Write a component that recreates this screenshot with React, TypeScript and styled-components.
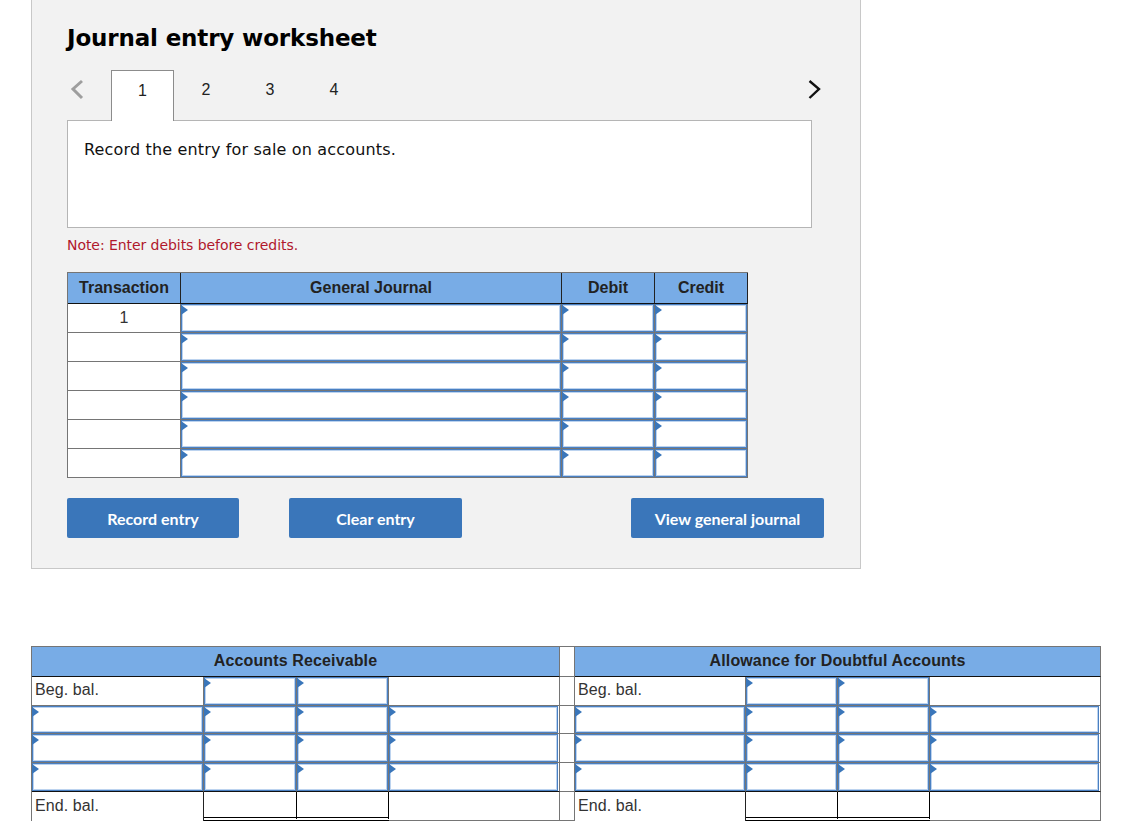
import styled, { createGlobalStyle } from 'styled-components'

const GlobalStyle = createGlobalStyle`
  html, body {
    margin: 0;
    padding: 0;
    background: #ffffff;
  }
  body {
    font-family: "Liberation Sans", Arial, sans-serif;
  }
`

// worksheet panel
const Page = styled.div`
  width: 1147px;
  height: 832px;
  overflow: hidden;
  padding-left: 31px;
  box-sizing: border-box;
`
const Panel = styled.section`
  width: 830px;
  height: 569px;
  box-sizing: border-box;
  padding: 22px 0 0 35px;
  background: #f2f2f2;
  border: 1px solid #c8c8c8;
  border-top: none;
`
const Title = styled.h1`
  margin: 0;
  font: bold 23px/32px "DejaVu Sans", Verdana, sans-serif;
  letter-spacing: -0.15px;
  color: #000000;
`
const TabRow = styled.div`
  display: flex;
  align-items: flex-start;
  width: 745px;
  height: 51px;
  margin-top: 16px;
  position: relative;
  z-index: 1;
`
const BackSlot = styled.div`
  display: flex;
  align-items: center;
  width: 44px;
  height: 38px;
`
const NextSlot = styled.div`
  display: flex;
  align-items: center;
  height: 38px;
  margin-left: auto;
  margin-right: -9px;
`
const Tab = styled.div<{ $active?: boolean }>`
  width: ${({ $active }) => ($active ? '63px' : '64px')};
  height: ${({ $active }) => ($active ? '51px' : '38px')};
  box-sizing: border-box;
  display: flex;
  align-items: center;
  justify-content: center;
  padding: ${({ $active }) => ($active ? '2px 0 13px' : '2px 0 0')};
  font-size: 16px;
  color: #222222;
  background: ${({ $active }) => ($active ? '#ffffff' : 'transparent')};
  border: ${({ $active }) => ($active ? '1px solid #8c8c8c' : 'none')};
  border-bottom: none;
`
const PromptBox = styled.div`
  width: 745px;
  height: 108px;
  box-sizing: border-box;
  margin-top: -1px;
  padding: 19px 16px;
  background: #ffffff;
  border: 1px solid #b5b5b5;
  font: 16px/20px "DejaVu Sans", Verdana, sans-serif;
  letter-spacing: 0.16px;
  color: #111111;
`
const Note = styled.p`
  margin: 9px 0 0;
  font: 14px/17px "DejaVu Sans", Verdana, sans-serif;
  letter-spacing: -0.06px;
  color: #b0182c;
`

// shared cells
const Cell = styled.div<{ $closing?: boolean }>`
  box-sizing: border-box;
  min-width: 0;
  background: #ffffff;
  border-right: 1px solid #757575;
  border-bottom: 1px solid ${({ $closing }) => ($closing ? '#111111' : '#757575')};
  font-size: 16px;
  color: #333333;
`
const HeaderCell = styled.div<{ $span?: number }>`
  grid-column: span ${({ $span }) => $span ?? 1};
  box-sizing: border-box;
  display: flex;
  align-items: center;
  justify-content: center;
  background: #78ace6;
  border-right: 1px solid #222222;
  border-bottom: 1px solid #111111;
  font-size: 16px;
  font-weight: bold;
  color: #222222;
`
const InputCell = styled(Cell)`
  display: flex;
`
const InputBox = styled.div<{ $inset?: boolean }>`
  flex: 1;
  position: relative;
  margin-right: ${({ $inset }) => ($inset ? '1px' : '0')};
  background: #ffffff;
  border: 1px solid #4a80c2;
  box-shadow: inset 0 0 0 1px #bcd3ef;
  &::before {
    content: '';
    position: absolute;
    left: -1px;
    top: 0;
    border-left: 7px solid #3a76ba;
    border-top: 5px solid transparent;
    border-bottom: 5px solid transparent;
  }
`

// journal table
const JournalGrid = styled.div`
  display: grid;
  grid-template-columns: 113px 381px 93px 93px;
  grid-template-rows: 31px repeat(6, 29px);
  width: 681px;
  margin-top: 18px;
  box-sizing: border-box;
  border-top: 1px solid #757575;
  border-left: 1px solid #757575;
`
const TransactionCell = styled(Cell)`
  display: flex;
  justify-content: center;
  padding-top: 5px;
  line-height: 18px;
`
const ButtonRow = styled.div`
  display: flex;
  margin-top: 20px;
`
const ActionButton = styled.button<{ $width: number; $gap: number }>`
  width: ${({ $width }) => $width}px;
  height: 40px;
  margin-right: ${({ $gap }) => $gap}px;
  padding: 0;
  border: none;
  border-radius: 2px;
  background: #3a76ba;
  color: #ffffff;
  font: bold 16px "Lato", sans-serif;
`

// T-accounts
const AccountsGrid = styled.div`
  display: grid;
  grid-template-columns: 172px 93px 92px 171px 15px 171px 92px 92px 171px;
  grid-template-rows: 30px 29px 28px 29px 29px 29px;
  width: 1070px;
  margin-top: 77px;
  box-sizing: border-box;
  border-top: 1px solid #757575;
  border-left: 1px solid #757575;
`
const AccountHeader = styled(HeaderCell)`
  padding-bottom: 2px;
  letter-spacing: 0.13px;
  border-right: 1px solid #757575;
`
const LabelCell = styled(Cell)<{ $open?: boolean }>`
  padding: ${({ $open }) => ($open ? '4px' : '3px')} 0 0 3px;
  line-height: 20px;
  letter-spacing: 0.1px;
  border-right-color: ${({ $open }) => ($open ? '#222222' : '#757575')};
  border-bottom: ${({ $open }) => ($open ? 'none' : '1px solid #757575')};
`
const TotalCell = styled(Cell)`
  border-right: 1px solid #000000;
  border-bottom: 4px double #000000;
`

const BackChevron = () => (
  <svg width="18" height="22" viewBox="0 0 18 22" fill="none">
    <path d="M15 3 L6 11 L15 20" stroke="#9e9e9e" strokeWidth="3" />
  </svg>
)
const NextChevron = () => (
  <svg width="14" height="22" viewBox="0 0 14 22" fill="none">
    <path d="M2.5 3 L12 11 L2.5 20" stroke="#111111" strokeWidth="2.4" />
  </svg>
)

const tabs = [1, 2, 3, 4]
const journalRows = ['1', '', '', '', '', '']

function BegRow() {
  return (
    <>
      <LabelCell>Beg. bal.</LabelCell>
      <InputCell><InputBox /></InputCell>
      <InputCell><InputBox /></InputCell>
      <Cell />
    </>
  )
}

function EntryRow({ closing }: { closing: boolean }) {
  return (
    <>
      <InputCell $closing={closing}><InputBox /></InputCell>
      <InputCell $closing={closing}><InputBox /></InputCell>
      <InputCell $closing={closing}><InputBox /></InputCell>
      <InputCell $closing={closing}><InputBox $inset /></InputCell>
    </>
  )
}

function EndRow() {
  return (
    <>
      <LabelCell $open>End. bal.</LabelCell>
      <TotalCell />
      <TotalCell />
      <Cell />
    </>
  )
}

function JournalRow({ value }: { value: string }) {
  return (
    <>
      <TransactionCell>{value}</TransactionCell>
      <InputCell><InputBox /></InputCell>
      <InputCell><InputBox /></InputCell>
      <InputCell><InputBox /></InputCell>
    </>
  )
}

function EntryGroup({ closing }: { closing: boolean }) {
  return (
    <>
      <EntryRow closing={closing} />
      <Cell />
      <EntryRow closing={closing} />
    </>
  )
}

export default function App() {
  return (
    <Page>
      <GlobalStyle />
      <Panel>
        <Title>Journal entry worksheet</Title>
        <TabRow>
          <BackSlot><BackChevron /></BackSlot>
          {tabs.map((tab) => (
            <Tab key={tab} $active={tab === 1}>{tab}</Tab>
          ))}
          <NextSlot><NextChevron /></NextSlot>
        </TabRow>
        <PromptBox>Record the entry for sale on accounts.</PromptBox>
        <Note>Note: Enter debits before credits.</Note>
        <JournalGrid>
          <HeaderCell>Transaction</HeaderCell>
          <HeaderCell>General Journal</HeaderCell>
          <HeaderCell>Debit</HeaderCell>
          <HeaderCell>Credit</HeaderCell>
          {journalRows.map((value, index) => (
            <JournalRow key={index} value={value} />
          ))}
        </JournalGrid>
        <ButtonRow>
          <ActionButton $width={172} $gap={50}>Record entry</ActionButton>
          <ActionButton $width={173} $gap={169}>Clear entry</ActionButton>
          <ActionButton $width={193} $gap={0}>View general journal</ActionButton>
        </ButtonRow>
      </Panel>
      <AccountsGrid>
        <AccountHeader $span={4}>Accounts Receivable</AccountHeader>
        <Cell />
        <AccountHeader $span={4}>Allowance for Doubtful Accounts</AccountHeader>
        <BegRow />
        <Cell />
        <BegRow />
        {[0, 1, 2].map((row) => (
          <EntryGroup key={row} closing={row === 2} />
        ))}
        <EndRow />
        <Cell />
        <EndRow />
      </AccountsGrid>
    </Page>
  )
}
